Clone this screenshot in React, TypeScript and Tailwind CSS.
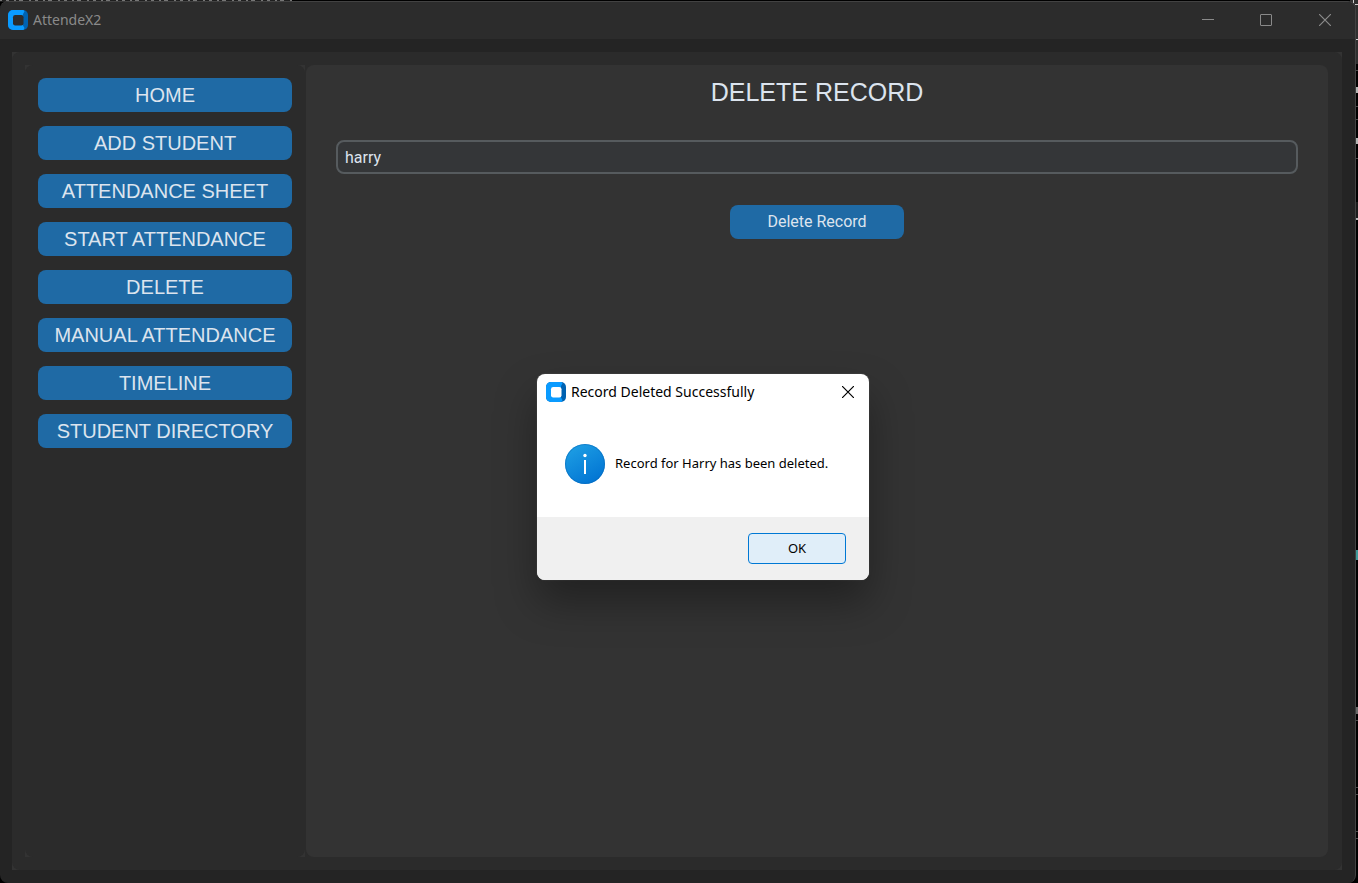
import React, { useState } from "react";

const NAV_ITEMS = [
  "HOME",
  "ADD STUDENT",
  "ATTENDANCE SHEET",
  "START ATTENDANCE",
  "DELETE",
  "MANUAL ATTENDANCE",
  "TIMELINE",
  "STUDENT DIRECTORY",
];

function AppLogo({ center }: { center: string }) {
  return (
    <svg className="size-5 shrink-0" viewBox="0 0 20 20" aria-hidden="true">
      <rect width="20" height="20" rx="5" fill="#0062b1" />
      <path d="M5 0H15.5L16.5 1.5 15 4V15.5L16.5 18 15.5 20H5A5 5 0 0 1 0 15V5A5 5 0 0 1 5 0Z" fill="#0a9bff" />
      <rect x="5" y="5" width="10.5" height="10.5" rx="2.2" fill={center} />
    </svg>
  );
}

function InfoIcon() {
  return (
    <svg className="size-10 shrink-0" viewBox="0 0 40 40" aria-hidden="true">
      <defs>
        <linearGradient id="info-fill" x1="0.2" y1="0" x2="0.8" y2="1">
          <stop offset="0" stopColor="#1e9fe4" />
          <stop offset="1" stopColor="#0072d2" />
        </linearGradient>
      </defs>
      <circle cx="20" cy="20" r="20" fill="url(#info-fill)" />
      <circle cx="20" cy="20" r="19.5" fill="none" stroke="#0868b8" strokeOpacity="0.5" />
      <circle cx="20" cy="11.5" r="1.7" fill="#fff" />
      <rect x="19" y="16" width="2" height="14" fill="#fff" />
    </svg>
  );
}

function CloseGlyph() {
  return (
    <svg className="size-3" viewBox="0 0 12 12" fill="none" stroke="currentColor" aria-hidden="true">
      <path d="M0 0L12 12M12 0L0 12" strokeWidth="1.2" />
    </svg>
  );
}

/* Slivers of the editor window that lies behind the app. */
function DesktopEdges() {
  return (
    <>
      <svg className="absolute top-0 left-0 h-0.5 w-[292px]" viewBox="0 0 292 2" aria-hidden="true">
        <rect width="292" height="2" fill="#1f1f1f" />
        <path d="M0 0.5H292" stroke="#777777" strokeDasharray="2 4 3 5 2 3 4 6" />
      </svg>
      <svg className="absolute top-0 right-0 h-[883px] w-[8px]" viewBox="0 0 8 883" aria-hidden="true">
        <rect width="8" height="64" fill="#2f2f2f" />
        <path d="M3.5 0V5M5 4.5H8M5 39.5H8" stroke="#d0d0d0" />
        <path d="M6 70.5H8M6 106.5H8M6 119.5H8M6 158.5H8M6 720.5H8M6 787.5H8M6 794.5H8M6 831.5H8M6 838.5H8" stroke="#4a4a4a" />
        <rect x="6" y="202" width="2" height="16" fill="#1c1c1c" />
        <path d="M7 87V93M7 138V144M7 218V220" stroke="#b4b4b4" strokeWidth="2" />
        <path d="M7 550V560" stroke="#3f9a9a" strokeWidth="2" />
        <path d="M7 707V714" stroke="#6a6a6a" strokeWidth="2" />
      </svg>
    </>
  );
}

function TitleBar() {
  return (
    <header className="flex h-[37px] items-center bg-[#2c2c2c] pb-px pl-2 text-[#8a8a8a]">
      <AppLogo center="#2c2c2c" />
      <span className="ml-[5px] flex-1 font-['Noto_Sans',sans-serif] text-sm">AttendeX2</span>
      <button type="button" aria-label="Minimize" className="flex h-full w-[58px] items-center justify-center">
        <svg className="size-3" viewBox="0 0 12 12" stroke="currentColor" aria-hidden="true">
          <path d="M0 5.5H12" />
        </svg>
      </button>
      <button type="button" aria-label="Maximize" className="flex h-full w-[58px] items-center justify-center">
        <svg className="size-3" viewBox="0 0 12 12" fill="none" stroke="currentColor" aria-hidden="true">
          <rect x="0.5" y="0.5" width="11" height="11" rx="0.5" />
        </svg>
      </button>
      <button type="button" aria-label="Close" className="flex h-full w-[60px] items-center justify-center">
        <CloseGlyph />
      </button>
    </header>
  );
}

function Sidebar() {
  return (
    <div className="flex w-[280px] shrink-0 bg-[#333333]">
      <nav className="flex flex-1 flex-col gap-[14px] rounded-lg bg-[#2b2b2b] p-[13px]">
        {NAV_ITEMS.map((item) => (
          <button
            key={item}
            type="button"
            className="h-[34px] rounded-lg bg-[#1f6aa5] text-center text-xl whitespace-nowrap text-[#dce4ee]"
          >
            {item}
          </button>
        ))}
      </nav>
    </div>
  );
}

function DeletePage() {
  const [name, setName] = useState("harry");
  return (
    <main className="ml-px flex flex-1 flex-col items-center rounded-lg bg-[#333333] px-[30px]">
      <h1 className="mt-3 text-[25px] leading-[30px] text-[#dce4ee]">DELETE RECORD</h1>
      <input
        type="text"
        aria-label="Student name"
        value={name}
        onChange={(e) => setName(e.target.value)}
        className="mt-[33px] h-[34px] w-full rounded-lg border-2 border-[#565b5e] bg-[#343638] px-[7px] font-[Roboto,sans-serif] text-base text-[#dce4ee] outline-none"
      />
      <button
        type="button"
        className="mt-[31px] h-[34px] w-[174px] rounded-lg bg-[#1f6aa5] font-[Roboto,sans-serif] text-base text-[#dce4ee]"
      >
        Delete Record
      </button>
    </main>
  );
}

function MessageDialog() {
  return (
    <div
      role="dialog"
      aria-labelledby="dialog-title"
      aria-describedby="dialog-text"
      className="absolute top-[374px] left-[537px] flex w-[332px] flex-col overflow-hidden rounded-lg bg-white font-['Noto_Sans',sans-serif] text-black shadow-[0_22px_42px_rgba(0,0,0,0.35),0_0_1px_1px_rgba(70,70,70,0.6)]"
    >
      <div className="flex h-9 items-center pl-[9px]">
        <AppLogo center="#ffffff" />
        <h2 id="dialog-title" className="ml-[5px] flex-1 text-sm whitespace-nowrap">
          Record Deleted Successfully
        </h2>
        <button type="button" aria-label="Close dialog" className="flex h-full w-[43px] items-center justify-center">
          <CloseGlyph />
        </button>
      </div>
      <div className="flex h-[107px] items-center gap-[10px] px-7">
        <InfoIcon />
        <p id="dialog-text" className="text-[13px] whitespace-nowrap">
          Record for Harry has been deleted.
        </p>
      </div>
      <div className="flex h-[63px] items-center justify-end bg-[#f0f0f0] pr-[23px]">
        <button
          type="button"
          className="h-[31px] w-[98px] rounded border border-[#0078d4] bg-[#e0eef9] text-[13px]"
        >
          OK
        </button>
      </div>
    </div>
  );
}

export default function App() {
  return (
    <div className="relative flex min-h-screen overflow-hidden bg-black pt-px pr-0.5 font-['Liberation_Sans',sans-serif]">
      <DesktopEdges />
      <div className="relative flex flex-1 flex-col overflow-hidden rounded-lg border-t border-r border-[#424242] bg-[#242424]">
        <TitleBar />
        <div className="mt-[13px] mr-[13px] mb-[13px] ml-3 flex flex-1 bg-[#333333]">
          <div className="flex flex-1 rounded-lg bg-[#2b2b2b] pt-[13px] pr-[14px] pb-[13px] pl-[13px]">
            <Sidebar />
            <DeletePage />
          </div>
        </div>
      </div>
      <MessageDialog />
    </div>
  );
}
